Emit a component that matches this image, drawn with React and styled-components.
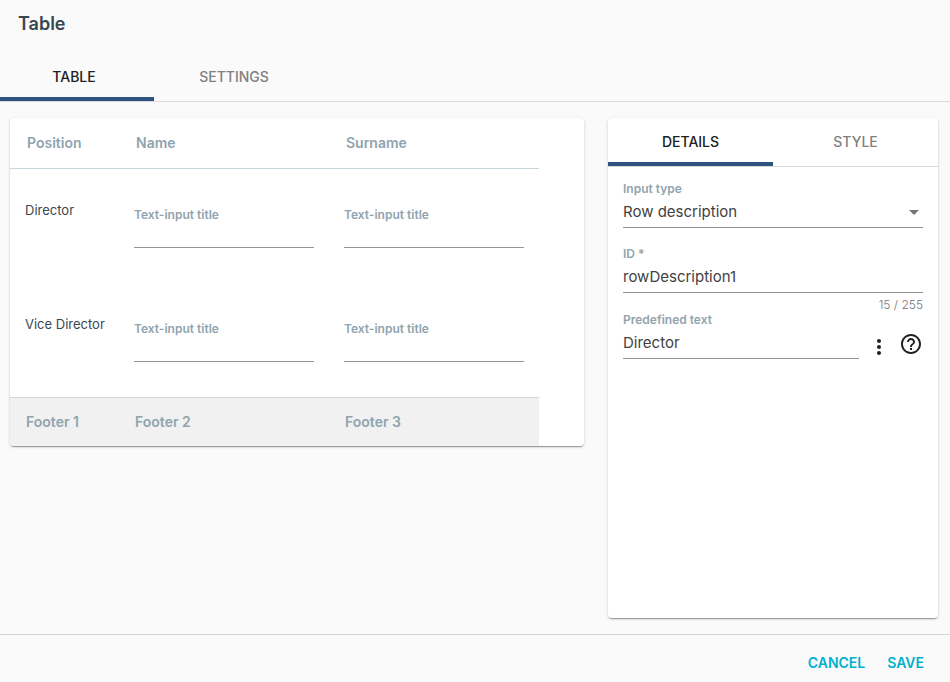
import { useState } from 'react';
import styled, { createGlobalStyle } from 'styled-components';
import { MdArrowDropDown, MdHelpOutline, MdMoreVert } from 'react-icons/md';


const GlobalStyle = createGlobalStyle`
    * {
        box-sizing: border-box;
    }
    body {
        margin: 0;
        background-color: #fafafa;
        color: #37474f;
        font-family: Inter, 'Liberation Sans', sans-serif;
        font-size: 13px;
        line-height: 16px;
    }
    button, input, select {
        font-family: inherit;
        border: none;
        border-radius: 0;
        background: none;
        padding: 0;
        margin: 0;
        outline: none;
    }
    button {
        cursor: pointer;
    }
`
const Dialog = styled.div`
    display: flex;
    flex-direction: column;
    min-height: 100vh;
    overflow: hidden;
`
const Title = styled.h1`
    margin: 0;
    padding: 12px 18px 17px;
    font-size: 18px;
    line-height: 24px;
    font-weight: 600;
    color: #37474f;
`
const TabBar = styled.div`
    display: flex;
    border-bottom: 1px solid #d9dcde;
`
const MainTabBar = styled(TabBar)`
    margin-left: -6px;
`
const Tab = styled.button`
    flex: ${({ $fill }) => ($fill ? '1 1 0' : '0 0 160px')};
    height: 48px;
    padding-top: 4px;
    border-bottom: 4px solid ${({ $active }) => ($active ? '#30527f' : 'transparent')};
    color: ${({ $active }) => ($active ? '#212121' : '#808080')};
    font-size: 14px;
    line-height: 16px;
    font-weight: 500;
    text-transform: uppercase;
`
const Content = styled.main`
    flex: 1;
    display: grid;
    grid-template-columns: minmax(0, 1fr) 330px;
    gap: 24px;
    padding: 16px 12px 16px 10px;
`
const Card = styled.section`
    background-color: #fff;
    border-radius: 4px;
    overflow: hidden;
    box-shadow: 0 1px 3px rgba(0, 0, 0, .2), 0 2px 1px -1px rgba(0, 0, 0, .3);
`
const TableCard = styled(Card)`
    align-self: start;
`
const PreviewTable = styled.table`
    width: 529px;
    table-layout: fixed;
    border-spacing: 0;
    text-align: left;
`
const Column = styled.col`
    width: ${({ $narrow }) => ($narrow ? '109px' : '210px')};
`
const HeadCell = styled.th`
    height: 51px;
    padding: 0px 17px;
    border-bottom: 1px solid #c7d6dc;
    color: #90a4ae;
    font-size: 14px;
    font-weight: 600;
`
const BodyCell = styled.td`
    height: 114px;
    padding: 33px 15px 0px;
    vertical-align: top;
    white-space: nowrap;
`
const FieldCell = styled(BodyCell)`
    padding-top: 39px;
`
const FootCell = styled.td`
    height: 49px;
    padding: 0px 16px;
    border-top: 1px solid #cfd8dc;
    background-color: #f1f1f1;
    color: #90a4ae;
    font-size: 14px;
    font-weight: 600;
`
const Label = styled.label`
    display: block;
    color: #90a4ae;
    font-size: 12px;
    line-height: 14px;
    font-weight: 600;
`
const Input = styled.input`
    display: block;
    width: 100%;
    height: 32px;
    border-bottom: 1px solid #949494;
    color: #424242;
    font-size: 15px;
`
const CellInput = styled(Input)`
    height: 26px;
`
const Form = styled.form`
    padding: 15px;
`
const Field = styled.div`
    flex: 1;
    position: relative;
`
const SelectField = styled(Field)`
    margin-bottom: 19px;
    svg {
        position: absolute;
        right: -3px;
        bottom: 4px;
        color: #757575;
        pointer-events: none;
    }
`
const Select = styled.select`
    display: block;
    width: 100%;
    height: 32px;
    appearance: none;
    border-bottom: 1px solid #949494;
    color: #424242;
    font-size: 15px;
`
const Counter = styled.p`
    margin: 4px 0px 0px;
    color: #757575;
    font-size: 12px;
    line-height: 16px;
    font-weight: 300;
    text-align: right;
`
const FieldRow = styled.div`
    display: flex;
    align-items: flex-end;
    gap: 8px;
`
const IconButton = styled.button`
    display: flex;
    color: #212121;
`
const HelpButton = styled(IconButton)`
    padding-bottom: 3px;
`
const Actions = styled.footer`
    display: flex;
    justify-content: flex-end;
    align-items: center;
    gap: 22px;
    height: 48px;
    padding: 7px 26px 0px;
    border-top: 1px solid #cfd8dc;
`
const ActionButton = styled.button`
    color: #00b0cc;
    font-size: 14px;
    font-weight: 600;
    text-transform: uppercase;
`

const rows = [
  { id: 'director', title: 'Director' },
  { id: 'viceDirector', title: 'Vice Director' },
];

const Preview = () => {
  return (
      <TableCard>
          <PreviewTable>
              <colgroup>
                  <Column $narrow />
                  <Column />
                  <Column />
              </colgroup>
              <thead>
                  <tr>
                      <HeadCell>Position</HeadCell>
                      <HeadCell>Name</HeadCell>
                      <HeadCell>Surname</HeadCell>
                  </tr>
              </thead>
              <tbody>
                  {rows.map(({ id, title }) => (
                      <tr key={id}>
                          <BodyCell>{title}</BodyCell>
                          {['name', 'surname'].map((column) => (
                              <FieldCell key={column}>
                                  <Label htmlFor={`${id}-${column}`}>Text-input title</Label>
                                  <CellInput id={`${id}-${column}`} type='text' />
                              </FieldCell>
                          ))}
                      </tr>
                  ))}
              </tbody>
              <tfoot>
                  <tr>
                      <FootCell>Footer 1</FootCell>
                      <FootCell>Footer 2</FootCell>
                      <FootCell>Footer 3</FootCell>
                  </tr>
              </tfoot>
          </PreviewTable>
      </TableCard>
  )
}

const Details = () => {
  const [rowId, setRowId] = useState('rowDescription1');

  return (
      <Form>
          <SelectField>
              <Label htmlFor='inputType'>Input type</Label>
              <Select id='inputType'>
                  <option>Row description</option>
                  <option>Text input</option>
              </Select>
              <MdArrowDropDown size={24} />
          </SelectField>
          <Field>
              <Label htmlFor='rowId'>ID *</Label>
              <Input id='rowId' type='text' maxLength={255} value={rowId} onChange={(e) => setRowId(e.target.value)} />
              <Counter>{rowId.length} / 255</Counter>
          </Field>
          <FieldRow>
              <Field>
                  <Label htmlFor='predefined'>Predefined text</Label>
                  <Input id='predefined' type='text' defaultValue='Director' />
              </Field>
              <IconButton type='button' aria-label='More options'>
                  <MdMoreVert size={24} />
              </IconButton>
              <HelpButton type='button' aria-label='Help'>
                  <MdHelpOutline size={24} />
              </HelpButton>
          </FieldRow>
      </Form>
  )
}

const App = () => {
  return (
      <>
          <GlobalStyle />
          <Dialog>
              <Title>Table</Title>
              <MainTabBar role='tablist'>
                  <Tab role='tab' aria-selected='true' $active>Table</Tab>
                  <Tab role='tab' aria-selected='false'>Settings</Tab>
              </MainTabBar>
              <Content>
                  <Preview />
                  <Card>
                      <TabBar role='tablist'>
                          <Tab role='tab' aria-selected='true' $fill $active>Details</Tab>
                          <Tab role='tab' aria-selected='false' $fill>Style</Tab>
                      </TabBar>
                      <Details />
                  </Card>
              </Content>
              <Actions>
                  <ActionButton type='button'>Cancel</ActionButton>
                  <ActionButton type='button'>Save</ActionButton>
              </Actions>
          </Dialog>
      </>
  )
}

export default App
